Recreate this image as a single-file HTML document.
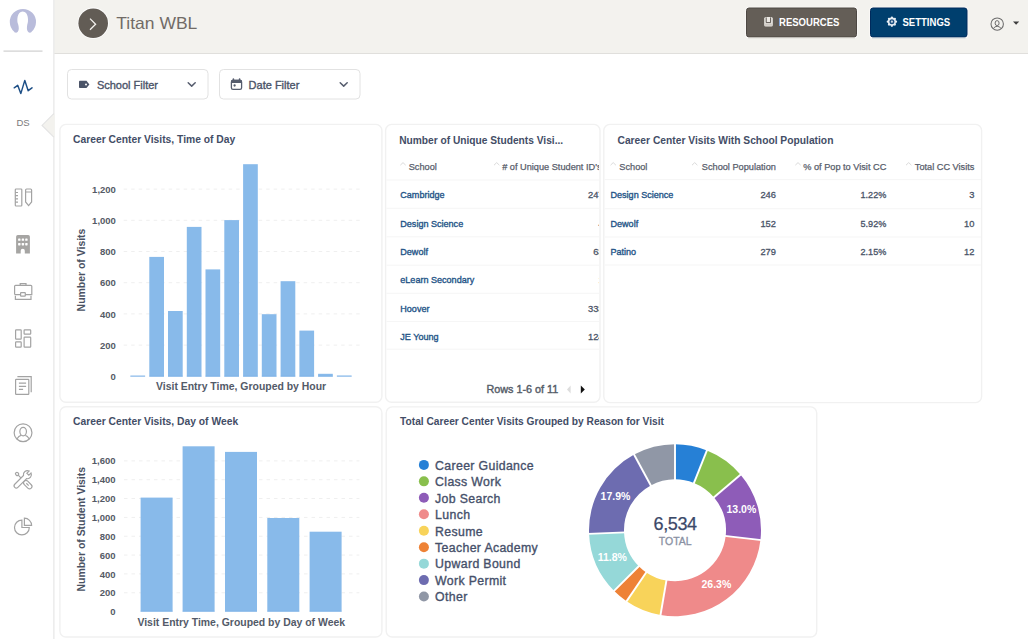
<!DOCTYPE html>
<html><head><meta charset="utf-8"><title>Titan WBL</title>
<style>html,body{margin:0;padding:0;background:#fff;width:1028px;height:639px;overflow:hidden}</style>
</head><body>
<svg width="1028" height="639" viewBox="0 0 1028 639" style="display:block;font-family:'Liberation Sans', sans-serif">
<rect x="0" y="0" width="1028" height="639" fill="#ffffff"/>
<rect x="54" y="0" width="974" height="53" fill="#f3f2ee"/>
<rect x="54" y="53" width="974" height="1" fill="#e0dfdc"/>
<rect x="53.1" y="0" width="1.5" height="639" fill="#ebebeb"/>
<path d="M54.6 113.4 L42.1 125.4 L54.6 137.4 Z" fill="#f3f2ee"/>
<path d="M53.85 113.6 L42.1 125.4 L53.85 137.2" fill="none" stroke="#e3e3e3" stroke-width="1.2"/>
<path d="M18.2 24.4 C18.9 27 19.2 30 17.8 31.8 C16.8 33 14.9 33.3 14.0 31.6 A13.1 13.1 0 1 1 31.8 31.6 C30.9 33.3 29 33 28 31.8 C26.6 30 26.8 27 27.3 24.4 C28.8 21.5 28.5 11.5 22.7 11.5 C16.9 11.5 16.6 21.5 18.2 24.4 Z" fill="#b9bcdb"/>
<rect x="3.5" y="50.5" width="39" height="1.2" fill="#cfcfcf"/>
<path d="M14.2 87.8 L17.7 85.3 L20.8 93.6 L24.8 80.4 L28.2 90.7 L32 87.8" fill="none" stroke="#1d4f86" stroke-width="1.45" stroke-linejoin="round" stroke-linecap="round"/>
<text x="23" y="126.3" font-size="9.5" font-weight="400" fill="#7a7a7a" text-anchor="middle" >DS</text>
<g fill="none" stroke="#a3a3a3" stroke-width="1.2">
<rect x="15.3" y="189" width="6.5" height="17" rx="0.8"/>
<path d="M15.3 192.5 H18 M15.3 195.6 H18 M15.3 198.8 H18 M15.3 202.2 H18"/>
<path d="M25.6 190 Q25.6 189 26.6 189 H30.6 Q31.6 189 31.6 190 V202 L28.6 205.6 L25.6 202 Z M25.6 192 H31.6"/>
</g>
<path d="M16.1 253.6 V236.8 Q16.1 235.1 17.8 235.1 H28.2 Q29.9 235.1 29.9 236.8 V253.6 H24.8 V250.7 A2.05 2.05 0 0 0 20.7 250.7 V253.6 Z" fill="#a6a5a3"/>
<rect x="18.10" y="238.40" width="2.4" height="2.4" rx="0.6" fill="#fff"/>
<rect x="18.10" y="243.00" width="2.4" height="2.4" rx="0.6" fill="#fff"/>
<rect x="21.70" y="238.40" width="2.4" height="2.4" rx="0.6" fill="#fff"/>
<rect x="21.70" y="243.00" width="2.4" height="2.4" rx="0.6" fill="#fff"/>
<rect x="25.20" y="238.40" width="2.4" height="2.4" rx="0.6" fill="#fff"/>
<rect x="25.20" y="243.00" width="2.4" height="2.4" rx="0.6" fill="#fff"/>
<g fill="none" stroke="#a3a3a3" stroke-width="1.2">
<path d="M20.2 285.3 V283.6 H26 V285.3"/>
<path d="M14.6 294.6 V286.3 Q14.6 285.3 15.6 285.3 H30.8 Q31.8 285.3 31.8 286.3 V294.6 H25.3 M20.6 294.6 H14.6"/>
<path d="M15.4 295.8 V299.3 H31 V295.8"/>
<rect x="20.6" y="292.6" width="4.7" height="3.6" rx="0.5"/>
<rect x="15.6" y="329.8" width="5.6" height="9.4" rx="0.6"/>
<rect x="24.1" y="329.8" width="6.6" height="4.4" rx="0.6"/>
<rect x="15.6" y="341.8" width="5.6" height="5.4" rx="0.6"/>
<rect x="24.1" y="337.2" width="6.6" height="10" rx="0.6"/>
<rect x="15.6" y="379.4" width="13.2" height="15" rx="0.6"/>
<path d="M17.4 376.6 H31.2 V392.2"/>
<path d="M18.9 383.1 H26.1 M18.9 386.3 H26.1 M18.9 389.4 H23.1"/>
<circle cx="23.05" cy="432.7" r="8.9"/>
<ellipse cx="23.15" cy="431.6" rx="3.3" ry="4.2"/>
<path d="M16.9 439 Q18.8 435.7 21 435.4 M25.3 435.4 Q27.5 435.7 29.3 439"/>
</g>
<g transform="translate(22.6 479.5) rotate(-45)" fill="#fff" stroke="#a3a3a3" stroke-width="1.15">
<rect x="-1.4" y="-9.4" width="2.8" height="3.2" rx="1.2"/>
<path d="M0 -6.2 V-1"/>
<rect x="-2.4" y="2.4" width="4.8" height="9.8" rx="2.4"/>
<path d="M0 5.3 V8.6"/>
</g>
<g transform="translate(22.6 479.5) rotate(45)" fill="#fff" stroke="#a3a3a3" stroke-width="1.15">
<path d="M-1.4 -10.55 L-1.4 -7.4 L1.4 -7.4 L1.4 -10.55 A4.0 4.0 0 0 1 2.2 -3.46 L2.2 8.9 A2.2 2.2 0 0 1 -2.2 8.9 L-2.2 -3.46 A4.0 4.0 0 0 1 -1.4 -10.55 Z"/>
</g>
<g fill="none" stroke="#a3a3a3" stroke-width="1.2">
<path d="M21.9 520.1 A7.4 7.4 0 1 0 29.3 527.5 H21.9 Z"/>
<path d="M24.4 518.2 A7.2 7.2 0 0 1 31.6 525.4 H24.4 Z"/>
</g>
<circle cx="93.2" cy="23.2" r="15.6" fill="#ffffff"/>
<circle cx="93.2" cy="23.2" r="14.8" fill="#625c55"/>
<path d="M90 18.6 L95.6 24.2 L90 29.8" fill="none" stroke="#f4f2ee" stroke-width="1.3"/>
<text x="116.3" y="29" font-size="16.5" font-weight="400" fill="#716b66" text-anchor="start"  textLength="81" lengthAdjust="spacingAndGlyphs">Titan WBL</text>
<rect x="745.3" y="6.8" width="112.4" height="31.6" rx="3.5" fill="#fbfaf8"/>
<rect x="746.5" y="8" width="110" height="29" rx="2.5" fill="#645e57" stroke="#4d4843" stroke-width="1"/>
<rect x="748" y="37.3" width="107" height="1" fill="#c9c6c1"/>
<rect x="764.2" y="17" width="8.6" height="9.5" rx="1.6" fill="#ece9e4"/>
<path d="M766.2 17.4 V22.6 H770.6 V17.4" fill="none" stroke="#4e4843" stroke-width="0.9"/>
<rect x="764.9" y="23.6" width="7.2" height="2.2" fill="#cfcac4"/>
<text x="779" y="25.9" font-size="10.3" font-weight="700" fill="#ffffff" text-anchor="start"  textLength="60.4" lengthAdjust="spacingAndGlyphs">RESOURCES</text>
<rect x="869.3" y="6.8" width="98.9" height="31.6" rx="3.5" fill="#fbfaf8"/>
<rect x="870.5" y="8" width="96.5" height="29" rx="2.5" fill="#003f6e" stroke="#002a5c" stroke-width="1"/>
<rect x="872" y="37.3" width="93.5" height="1" fill="#aab9c5"/>
<circle cx="891.9" cy="21.7" r="4.1" fill="#e6edf3"/>
<circle cx="896.00" cy="21.70" r="1.15" fill="#e6edf3"/>
<circle cx="894.80" cy="24.60" r="1.15" fill="#e6edf3"/>
<circle cx="891.90" cy="25.80" r="1.15" fill="#e6edf3"/>
<circle cx="889.00" cy="24.60" r="1.15" fill="#e6edf3"/>
<circle cx="887.80" cy="21.70" r="1.15" fill="#e6edf3"/>
<circle cx="889.00" cy="18.80" r="1.15" fill="#e6edf3"/>
<circle cx="891.90" cy="17.60" r="1.15" fill="#e6edf3"/>
<circle cx="894.80" cy="18.80" r="1.15" fill="#e6edf3"/>
<circle cx="891.9" cy="21.7" r="2.5" fill="#1b4f80"/>
<circle cx="891.9" cy="21.7" r="1.1" fill="#c9d6e2"/>
<text x="902.5" y="26.1" font-size="10.3" font-weight="700" fill="#ffffff" text-anchor="start"  textLength="47.7" lengthAdjust="spacingAndGlyphs">SETTINGS</text>
<circle cx="997.2" cy="24.1" r="6.2" fill="none" stroke="#6c6c6c" stroke-width="1.05"/>
<ellipse cx="997.1" cy="23.1" rx="2" ry="2.5" fill="none" stroke="#6c6c6c" stroke-width="1"/>
<path d="M993.4 28.6 Q994.4 26.3 997.2 26.3 Q1000 26.3 1001 28.6" fill="none" stroke="#6c6c6c" stroke-width="1"/>
<path d="M1013 21.5 L1019.2 21.5 L1016.1 24.8 Z" fill="#3c3c3c"/>
<rect x="67.5" y="69.5" width="140.5" height="29.5" rx="4" fill="#fff" stroke="#e2e2e2" stroke-width="1"/>
<text x="96.9" y="88.5" font-size="11" font-weight="400" fill="#4b5468" text-anchor="start" letter-spacing="0"  stroke="#4b5468" stroke-width="0.35">School Filter</text>
<path d="M188.2 82.8 L191.7 86.1 L195.2 82.8" fill="none" stroke="#565d6e" stroke-width="1.5" stroke-linecap="round" stroke-linejoin="round"/>
<rect x="219.5" y="69.5" width="140.5" height="29.5" rx="4" fill="#fff" stroke="#e2e2e2" stroke-width="1"/>
<text x="248.6" y="88.5" font-size="11" font-weight="400" fill="#4b5468" text-anchor="start" letter-spacing="0"  stroke="#4b5468" stroke-width="0.35">Date Filter</text>
<path d="M340.2 82.8 L343.7 86.1 L347.2 82.8" fill="none" stroke="#565d6e" stroke-width="1.5" stroke-linecap="round" stroke-linejoin="round"/>
<path d="M79 81.5 Q79 80.7 79.8 80.7 H86.5 L89.4 84.4 L86.5 88.1 H79.8 Q79 88.1 79 87.3 Z" fill="#4b5468"/>
<circle cx="86" cy="84.4" r="1" fill="#fff"/>
<rect x="231.4" y="80.3" width="10.2" height="9.1" rx="1.6" fill="none" stroke="#565d6e" stroke-width="1.3"/>
<path d="M231 82.6 V81.2 Q231 79.7 232.5 79.7 H240.5 Q242 79.7 242 81.2 V82.9 H231 Z" fill="#565d6e"/>
<path d="M233.4 79.1 V80.5 M239.6 79.1 V80.5" stroke="#565d6e" stroke-width="1.6" stroke-linecap="round"/>
<circle cx="234.6" cy="85.5" r="1.15" fill="#565d6e"/>
<rect x="59.9" y="124.4" width="322.0" height="277.9" rx="6" fill="#fff" stroke="#f1f1f1" stroke-width="1.4"/>
<rect x="385.6" y="124.4" width="214.39999999999998" height="277.79999999999995" rx="6" fill="#fff" stroke="#f1f1f1" stroke-width="1.4"/>
<rect x="603.8" y="124.4" width="377.80000000000007" height="278.20000000000005" rx="6" fill="#fff" stroke="#f1f1f1" stroke-width="1.4"/>
<rect x="59.9" y="406.7" width="322.0" height="230.3" rx="6" fill="#fff" stroke="#f1f1f1" stroke-width="1.4"/>
<rect x="386.2" y="406.9" width="430.50000000000006" height="230.10000000000002" rx="6" fill="#fff" stroke="#f1f1f1" stroke-width="1.4"/>
<text x="73.1" y="143.1" font-size="10.3" font-weight="700" fill="#434d66" text-anchor="start" >Career Center Visits, Time of Day</text>
<text x="399.2" y="143.6" font-size="10.2" font-weight="700" fill="#434d66" text-anchor="start" >Number of Unique Students Visi...</text>
<text x="617.5" y="143.7" font-size="10.28" font-weight="700" fill="#434d66" text-anchor="start" >Career Center Visits With School Population</text>
<text x="73.1" y="425.3" font-size="10.3" font-weight="700" fill="#434d66" text-anchor="start" >Career Center Visits, Day of Week</text>
<text x="400.1" y="425.4" font-size="10.2" font-weight="700" fill="#434d66" text-anchor="start" >Total Career Center Visits Grouped by Reason for Visit</text>
<text x="115.9" y="379.90" font-size="9.5" font-weight="700" fill="#555b66" text-anchor="end" >0</text>
<line x1="123.7" y1="345.10" x2="360.1" y2="345.10" stroke="#efefef" stroke-width="1" stroke-dasharray="3.5 4"/>
<text x="115.9" y="348.70" font-size="9.5" font-weight="700" fill="#555b66" text-anchor="end" >200</text>
<line x1="123.7" y1="313.90" x2="360.1" y2="313.90" stroke="#efefef" stroke-width="1" stroke-dasharray="3.5 4"/>
<text x="115.9" y="317.50" font-size="9.5" font-weight="700" fill="#555b66" text-anchor="end" >400</text>
<line x1="123.7" y1="282.70" x2="360.1" y2="282.70" stroke="#efefef" stroke-width="1" stroke-dasharray="3.5 4"/>
<text x="115.9" y="286.30" font-size="9.5" font-weight="700" fill="#555b66" text-anchor="end" >600</text>
<line x1="123.7" y1="251.50" x2="360.1" y2="251.50" stroke="#efefef" stroke-width="1" stroke-dasharray="3.5 4"/>
<text x="115.9" y="255.10" font-size="9.5" font-weight="700" fill="#555b66" text-anchor="end" >800</text>
<line x1="123.7" y1="220.30" x2="360.1" y2="220.30" stroke="#efefef" stroke-width="1" stroke-dasharray="3.5 4"/>
<text x="115.9" y="223.90" font-size="9.5" font-weight="700" fill="#555b66" text-anchor="end" >1,000</text>
<line x1="123.7" y1="189.10" x2="360.1" y2="189.10" stroke="#efefef" stroke-width="1" stroke-dasharray="3.5 4"/>
<text x="115.9" y="192.70" font-size="9.5" font-weight="700" fill="#555b66" text-anchor="end" >1,200</text>
<rect x="130.4" y="375.5" width="14.7" height="1.10" fill="#a9cdf0"/>
<rect x="130.4" y="375.8" width="14.7" height="0.8" fill="#74abe6" opacity="0.7"/>
<rect x="149.3" y="256.9" width="14.7" height="119.70" fill="#88baea"/>
<rect x="149.3" y="375.8" width="14.7" height="0.8" fill="#74abe6" opacity="0.7"/>
<rect x="168.0" y="311.0" width="14.7" height="65.60" fill="#88baea"/>
<rect x="168.0" y="375.8" width="14.7" height="0.8" fill="#74abe6" opacity="0.7"/>
<rect x="186.8" y="226.9" width="14.7" height="149.70" fill="#88baea"/>
<rect x="186.8" y="375.8" width="14.7" height="0.8" fill="#74abe6" opacity="0.7"/>
<rect x="205.5" y="269.4" width="14.7" height="107.20" fill="#88baea"/>
<rect x="205.5" y="375.8" width="14.7" height="0.8" fill="#74abe6" opacity="0.7"/>
<rect x="224.3" y="220.1" width="14.7" height="156.50" fill="#88baea"/>
<rect x="224.3" y="375.8" width="14.7" height="0.8" fill="#74abe6" opacity="0.7"/>
<rect x="243.1" y="164.2" width="14.7" height="212.40" fill="#88baea"/>
<rect x="243.1" y="375.8" width="14.7" height="0.8" fill="#74abe6" opacity="0.7"/>
<rect x="261.8" y="314.2" width="14.7" height="62.40" fill="#88baea"/>
<rect x="261.8" y="375.8" width="14.7" height="0.8" fill="#74abe6" opacity="0.7"/>
<rect x="280.6" y="281.2" width="14.7" height="95.40" fill="#88baea"/>
<rect x="280.6" y="375.8" width="14.7" height="0.8" fill="#74abe6" opacity="0.7"/>
<rect x="299.4" y="330.6" width="14.7" height="46.00" fill="#88baea"/>
<rect x="299.4" y="375.8" width="14.7" height="0.8" fill="#74abe6" opacity="0.7"/>
<rect x="318.1" y="373.8" width="14.7" height="2.80" fill="#88baea"/>
<rect x="318.1" y="375.8" width="14.7" height="0.8" fill="#74abe6" opacity="0.7"/>
<rect x="336.9" y="375.4" width="14.7" height="1.20" fill="#a9cdf0"/>
<rect x="336.9" y="375.8" width="14.7" height="0.8" fill="#74abe6" opacity="0.7"/>
<text x="241.1" y="390.4" font-size="10.45" font-weight="700" fill="#535a68" text-anchor="middle" >Visit Entry Time, Grouped by Hour</text>
<text transform="translate(85.1 270) rotate(-90)" x="0" y="0" font-size="10.45" font-weight="700" fill="#4a5263" text-anchor="middle">Number of Visits</text>
<text x="115.5" y="615.20" font-size="9.5" font-weight="700" fill="#555b66" text-anchor="end" >0</text>
<line x1="124" y1="592.76" x2="359.4" y2="592.76" stroke="#efefef" stroke-width="1" stroke-dasharray="3.5 4"/>
<text x="115.5" y="596.36" font-size="9.5" font-weight="700" fill="#555b66" text-anchor="end" >200</text>
<line x1="124" y1="573.92" x2="359.4" y2="573.92" stroke="#efefef" stroke-width="1" stroke-dasharray="3.5 4"/>
<text x="115.5" y="577.52" font-size="9.5" font-weight="700" fill="#555b66" text-anchor="end" >400</text>
<line x1="124" y1="555.08" x2="359.4" y2="555.08" stroke="#efefef" stroke-width="1" stroke-dasharray="3.5 4"/>
<text x="115.5" y="558.68" font-size="9.5" font-weight="700" fill="#555b66" text-anchor="end" >600</text>
<line x1="124" y1="536.24" x2="359.4" y2="536.24" stroke="#efefef" stroke-width="1" stroke-dasharray="3.5 4"/>
<text x="115.5" y="539.84" font-size="9.5" font-weight="700" fill="#555b66" text-anchor="end" >800</text>
<line x1="124" y1="517.40" x2="359.4" y2="517.40" stroke="#efefef" stroke-width="1" stroke-dasharray="3.5 4"/>
<text x="115.5" y="521.00" font-size="9.5" font-weight="700" fill="#555b66" text-anchor="end" >1,000</text>
<line x1="124" y1="498.56" x2="359.4" y2="498.56" stroke="#efefef" stroke-width="1" stroke-dasharray="3.5 4"/>
<text x="115.5" y="502.16" font-size="9.5" font-weight="700" fill="#555b66" text-anchor="end" >1,200</text>
<line x1="124" y1="479.72" x2="359.4" y2="479.72" stroke="#efefef" stroke-width="1" stroke-dasharray="3.5 4"/>
<text x="115.5" y="483.32" font-size="9.5" font-weight="700" fill="#555b66" text-anchor="end" >1,400</text>
<line x1="124" y1="460.88" x2="359.4" y2="460.88" stroke="#efefef" stroke-width="1" stroke-dasharray="3.5 4"/>
<text x="115.5" y="464.48" font-size="9.5" font-weight="700" fill="#555b66" text-anchor="end" >1,600</text>
<rect x="140.6" y="497.6" width="32" height="114.00" fill="#88baea"/>
<rect x="140.6" y="610.80" width="32" height="0.8" fill="#74abe6" opacity="0.7"/>
<rect x="182.6" y="446.3" width="32" height="165.30" fill="#88baea"/>
<rect x="182.6" y="610.80" width="32" height="0.8" fill="#74abe6" opacity="0.7"/>
<rect x="225.0" y="451.9" width="32" height="159.70" fill="#88baea"/>
<rect x="225.0" y="610.80" width="32" height="0.8" fill="#74abe6" opacity="0.7"/>
<rect x="267.3" y="518.0" width="32" height="93.60" fill="#88baea"/>
<rect x="267.3" y="610.80" width="32" height="0.8" fill="#74abe6" opacity="0.7"/>
<rect x="309.6" y="531.7" width="32" height="79.90" fill="#88baea"/>
<rect x="309.6" y="610.80" width="32" height="0.8" fill="#74abe6" opacity="0.7"/>
<text x="241.25" y="625.8" font-size="10.45" font-weight="700" fill="#535a68" text-anchor="middle" >Visit Entry Time, Grouped by Day of Week</text>
<text transform="translate(85.1 529.2) rotate(-90)" x="0" y="0" font-size="10.45" font-weight="700" fill="#4a5263" text-anchor="middle">Number of Student Visits</text>
<rect x="386.3" y="179.5" width="213" height="1" fill="#f6f6f6"/>
<rect x="386.3" y="207.8" width="213" height="1" fill="#f6f6f6"/>
<rect x="386.3" y="236.3" width="213" height="1" fill="#f6f6f6"/>
<rect x="386.3" y="264.7" width="213" height="1" fill="#f6f6f6"/>
<rect x="386.3" y="292.8" width="213" height="1" fill="#f6f6f6"/>
<rect x="386.3" y="321.0" width="213" height="1" fill="#f6f6f6"/>
<rect x="386.3" y="348.7" width="213" height="1" fill="#f6f6f6"/>
<path d="M400.3 165.2 L403.0 162.6 L405.7 165.2" fill="none" stroke="#d6d6d6" stroke-width="0.9"/>
<text x="408.7" y="170" font-size="9.2" font-weight="400" fill="#59606c" text-anchor="start"  stroke="#59606c" stroke-width="0.25">School</text>
<path d="M494 165.2 L496.7 162.6 L499.4 165.2" fill="none" stroke="#d6d6d6" stroke-width="0.9"/>
<svg x="386" y="150" width="213" height="260" overflow="hidden">
<text x="116.19999999999999" y="20" font-size="9.2" font-weight="400" fill="#59606c" text-anchor="start"  stroke="#59606c" stroke-width="0.25"># of Unique Student ID's</text>
<text x="217.60000000000002" y="48.40" font-size="9.4" font-weight="400" fill="#4a5468" text-anchor="end"  stroke="#4a5468" stroke-width="0.3">247</text>
<text x="217.60000000000002" y="76.70" font-size="9.4" font-weight="400" fill="#4a5468" text-anchor="end"  stroke="#4a5468" stroke-width="0.3">4</text>
<text x="217.60000000000002" y="105.00" font-size="9.4" font-weight="400" fill="#4a5468" text-anchor="end"  stroke="#4a5468" stroke-width="0.3">63</text>
<text x="217.60000000000002" y="133.30" font-size="9.4" font-weight="400" fill="#4a5468" text-anchor="end"  stroke="#4a5468" stroke-width="0.3">1</text>
<text x="217.60000000000002" y="161.60" font-size="9.4" font-weight="400" fill="#4a5468" text-anchor="end"  stroke="#4a5468" stroke-width="0.3">333</text>
<text x="217.60000000000002" y="189.90" font-size="9.4" font-weight="400" fill="#4a5468" text-anchor="end"  stroke="#4a5468" stroke-width="0.3">124</text>
</svg>
<text x="400.3" y="198.40" font-size="9.05" font-weight="400" fill="#245487" text-anchor="start"  stroke="#245487" stroke-width="0.35">Cambridge</text>
<text x="400.3" y="226.70" font-size="9.05" font-weight="400" fill="#245487" text-anchor="start"  stroke="#245487" stroke-width="0.35">Design Science</text>
<text x="400.3" y="255.00" font-size="9.05" font-weight="400" fill="#245487" text-anchor="start"  stroke="#245487" stroke-width="0.35">Dewolf</text>
<text x="400.3" y="283.30" font-size="9.05" font-weight="400" fill="#245487" text-anchor="start"  stroke="#245487" stroke-width="0.35">eLearn Secondary</text>
<text x="400.3" y="311.60" font-size="9.05" font-weight="400" fill="#245487" text-anchor="start"  stroke="#245487" stroke-width="0.35">Hoover</text>
<text x="400.3" y="339.90" font-size="9.05" font-weight="400" fill="#245487" text-anchor="start"  stroke="#245487" stroke-width="0.35">JE Young</text>
<text x="486.4" y="393.4" font-size="10.8" font-weight="400" fill="#555c68" text-anchor="start"  stroke="#555c68" stroke-width="0.4">Rows 1-6 of 11</text>
<path d="M570.6 385.6 L567 389.5 L570.6 393.4 Z" fill="#dddddd"/>
<path d="M580.8 385.6 L584.8 389.5 L580.8 393.4 Z" fill="#111"/>
<rect x="604.5" y="179.1" width="376.5" height="1" fill="#f6f6f6"/>
<rect x="604.5" y="208.2" width="376.5" height="1" fill="#f6f6f6"/>
<rect x="604.5" y="236.5" width="376.5" height="1" fill="#f6f6f6"/>
<rect x="604.5" y="264.5" width="376.5" height="1" fill="#f6f6f6"/>
<path d="M610.5 165.2 L613.2 162.6 L615.9 165.2" fill="none" stroke="#d6d6d6" stroke-width="0.9"/>
<text x="619.3" y="170" font-size="9.2" font-weight="400" fill="#59606c" text-anchor="start"  stroke="#59606c" stroke-width="0.25">School</text>
<path d="M692 165.2 L694.7 162.6 L697.4 165.2" fill="none" stroke="#d6d6d6" stroke-width="0.9"/>
<text x="775.9" y="170" font-size="9.2" font-weight="400" fill="#59606c" text-anchor="end"  stroke="#59606c" stroke-width="0.25">School Population</text>
<path d="M795.3 165.2 L798.0 162.6 L800.6999999999999 165.2" fill="none" stroke="#d6d6d6" stroke-width="0.9"/>
<text x="886.3" y="170" font-size="9.2" font-weight="400" fill="#59606c" text-anchor="end"  stroke="#59606c" stroke-width="0.25">% of Pop to Visit CC</text>
<path d="M906 165.2 L908.7 162.6 L911.4 165.2" fill="none" stroke="#d6d6d6" stroke-width="0.9"/>
<text x="974.4" y="170" font-size="9.2" font-weight="400" fill="#59606c" text-anchor="end"  stroke="#59606c" stroke-width="0.25">Total CC Visits</text>
<text x="610.5" y="198.40" font-size="9.05" font-weight="400" fill="#245487" text-anchor="start"  stroke="#245487" stroke-width="0.35">Design Science</text>
<text x="775.9" y="198.40" font-size="9.3" font-weight="400" fill="#4a5468" text-anchor="end"  stroke="#4a5468" stroke-width="0.3">246</text>
<text x="886.3" y="198.40" font-size="9.1" font-weight="400" fill="#4a5468" text-anchor="end"  stroke="#4a5468" stroke-width="0.3">1.22%</text>
<text x="974.4" y="198.40" font-size="9.3" font-weight="400" fill="#4a5468" text-anchor="end"  stroke="#4a5468" stroke-width="0.3">3</text>
<text x="610.5" y="226.90" font-size="9.05" font-weight="400" fill="#245487" text-anchor="start"  stroke="#245487" stroke-width="0.35">Dewolf</text>
<text x="775.9" y="226.90" font-size="9.3" font-weight="400" fill="#4a5468" text-anchor="end"  stroke="#4a5468" stroke-width="0.3">152</text>
<text x="886.3" y="226.90" font-size="9.1" font-weight="400" fill="#4a5468" text-anchor="end"  stroke="#4a5468" stroke-width="0.3">5.92%</text>
<text x="974.4" y="226.90" font-size="9.3" font-weight="400" fill="#4a5468" text-anchor="end"  stroke="#4a5468" stroke-width="0.3">10</text>
<text x="610.5" y="255.40" font-size="9.05" font-weight="400" fill="#245487" text-anchor="start"  stroke="#245487" stroke-width="0.35">Patino</text>
<text x="775.9" y="255.40" font-size="9.3" font-weight="400" fill="#4a5468" text-anchor="end"  stroke="#4a5468" stroke-width="0.3">279</text>
<text x="886.3" y="255.40" font-size="9.1" font-weight="400" fill="#4a5468" text-anchor="end"  stroke="#4a5468" stroke-width="0.3">2.15%</text>
<text x="974.4" y="255.40" font-size="9.3" font-weight="400" fill="#4a5468" text-anchor="end"  stroke="#4a5468" stroke-width="0.3">12</text>
<circle cx="423.9" cy="464.90" r="5" fill="#2680d6"/>
<text x="435.1" y="469.70" font-size="12.3" font-weight="400" fill="#46506a" text-anchor="start" letter-spacing="0.35"  stroke="#46506a" stroke-width="0.35">Career Guidance</text>
<circle cx="423.9" cy="481.36" r="5" fill="#89bf4d"/>
<text x="435.1" y="486.16" font-size="12.3" font-weight="400" fill="#46506a" text-anchor="start" letter-spacing="0.35"  stroke="#46506a" stroke-width="0.35">Class Work</text>
<circle cx="423.9" cy="497.82" r="5" fill="#8e5cb8"/>
<text x="435.1" y="502.62" font-size="12.3" font-weight="400" fill="#46506a" text-anchor="start" letter-spacing="0.35"  stroke="#46506a" stroke-width="0.35">Job Search</text>
<circle cx="423.9" cy="514.28" r="5" fill="#ef8a8a"/>
<text x="435.1" y="519.08" font-size="12.3" font-weight="400" fill="#46506a" text-anchor="start" letter-spacing="0.35"  stroke="#46506a" stroke-width="0.35">Lunch</text>
<circle cx="423.9" cy="530.74" r="5" fill="#f8d35a"/>
<text x="435.1" y="535.54" font-size="12.3" font-weight="400" fill="#46506a" text-anchor="start" letter-spacing="0.35"  stroke="#46506a" stroke-width="0.35">Resume</text>
<circle cx="423.9" cy="547.20" r="5" fill="#ee8236"/>
<text x="435.1" y="552.00" font-size="12.3" font-weight="400" fill="#46506a" text-anchor="start" letter-spacing="0.35"  stroke="#46506a" stroke-width="0.35">Teacher Academy</text>
<circle cx="423.9" cy="563.66" r="5" fill="#95d8d8"/>
<text x="435.1" y="568.46" font-size="12.3" font-weight="400" fill="#46506a" text-anchor="start" letter-spacing="0.35"  stroke="#46506a" stroke-width="0.35">Upward Bound</text>
<circle cx="423.9" cy="580.12" r="5" fill="#6d6cb0"/>
<text x="435.1" y="584.92" font-size="12.3" font-weight="400" fill="#46506a" text-anchor="start" letter-spacing="0.35"  stroke="#46506a" stroke-width="0.35">Work Permit</text>
<circle cx="423.9" cy="596.58" r="5" fill="#9097a6"/>
<text x="435.1" y="601.38" font-size="12.3" font-weight="400" fill="#46506a" text-anchor="start" letter-spacing="0.35"  stroke="#46506a" stroke-width="0.35">Other</text>
<path d="M675.00 444.25 A86.0 86.0 0 0 1 706.94 450.40 L693.94 482.90 A51.0 51.0 0 0 0 675.00 479.25 Z" fill="#2680d6"/>
<path d="M706.94 450.40 A86.0 86.0 0 0 1 740.59 474.63 L713.90 497.26 A51.0 51.0 0 0 0 693.94 482.90 Z" fill="#89bf4d"/>
<path d="M740.59 474.63 A86.0 86.0 0 0 1 760.45 539.99 L725.67 536.02 A51.0 51.0 0 0 0 713.90 497.26 Z" fill="#8e5cb8"/>
<path d="M760.45 539.99 A86.0 86.0 0 0 1 660.51 615.02 L666.41 580.52 A51.0 51.0 0 0 0 725.67 536.02 Z" fill="#ef8a8a"/>
<path d="M660.51 615.02 A86.0 86.0 0 0 1 626.54 601.29 L646.26 572.38 A51.0 51.0 0 0 0 666.41 580.52 Z" fill="#f8d35a"/>
<path d="M626.54 601.29 A86.0 86.0 0 0 1 613.98 590.85 L638.81 566.19 A51.0 51.0 0 0 0 646.26 572.38 Z" fill="#ee8236"/>
<path d="M613.98 590.85 A86.0 86.0 0 0 1 589.08 533.85 L624.04 532.39 A51.0 51.0 0 0 0 638.81 566.19 Z" fill="#95d8d8"/>
<path d="M589.08 533.85 A86.0 86.0 0 0 1 634.10 454.60 L650.74 485.39 A51.0 51.0 0 0 0 624.04 532.39 Z" fill="#6d6cb0"/>
<path d="M634.10 454.60 A86.0 86.0 0 0 1 675.00 444.25 L675.00 479.25 A51.0 51.0 0 0 0 650.74 485.39 Z" fill="#9097a6"/>
<line x1="675.00" y1="480.25" x2="675.00" y2="443.25" stroke="#fff" stroke-width="1.9"/>
<line x1="693.57" y1="483.83" x2="707.31" y2="449.47" stroke="#fff" stroke-width="1.9"/>
<line x1="713.13" y1="497.91" x2="741.35" y2="473.98" stroke="#fff" stroke-width="1.9"/>
<line x1="724.68" y1="535.91" x2="761.44" y2="540.10" stroke="#fff" stroke-width="1.9"/>
<line x1="666.58" y1="579.54" x2="660.34" y2="616.01" stroke="#fff" stroke-width="1.9"/>
<line x1="646.82" y1="571.55" x2="625.97" y2="602.12" stroke="#fff" stroke-width="1.9"/>
<line x1="639.52" y1="565.48" x2="613.27" y2="591.55" stroke="#fff" stroke-width="1.9"/>
<line x1="625.04" y1="532.34" x2="588.08" y2="533.89" stroke="#fff" stroke-width="1.9"/>
<line x1="651.22" y1="486.27" x2="633.62" y2="453.72" stroke="#fff" stroke-width="1.9"/>
<text x="675.1" y="530.2" font-size="18" font-weight="400" fill="#3b4868" text-anchor="middle" letter-spacing="-0.4"  stroke="#3b4868" stroke-width="0.25">6,534</text>
<text x="675.2" y="545.3" font-size="10.5" font-weight="400" fill="#8a91a3" text-anchor="middle"  stroke="#8a91a3" stroke-width="0.3">TOTAL</text>
<text x="615.45" y="499.5" font-size="10.5" font-weight="700" fill="#ffffff" text-anchor="middle" >17.9%</text>
<text x="741.35" y="512.9" font-size="10.5" font-weight="700" fill="#ffffff" text-anchor="middle" >13.0%</text>
<text x="716.4" y="588.2" font-size="10.5" font-weight="700" fill="#ffffff" text-anchor="middle" >26.3%</text>
<text x="612.25" y="561" font-size="10.5" font-weight="700" fill="#ffffff" text-anchor="middle" >11.8%</text>
</svg>
</body></html>
